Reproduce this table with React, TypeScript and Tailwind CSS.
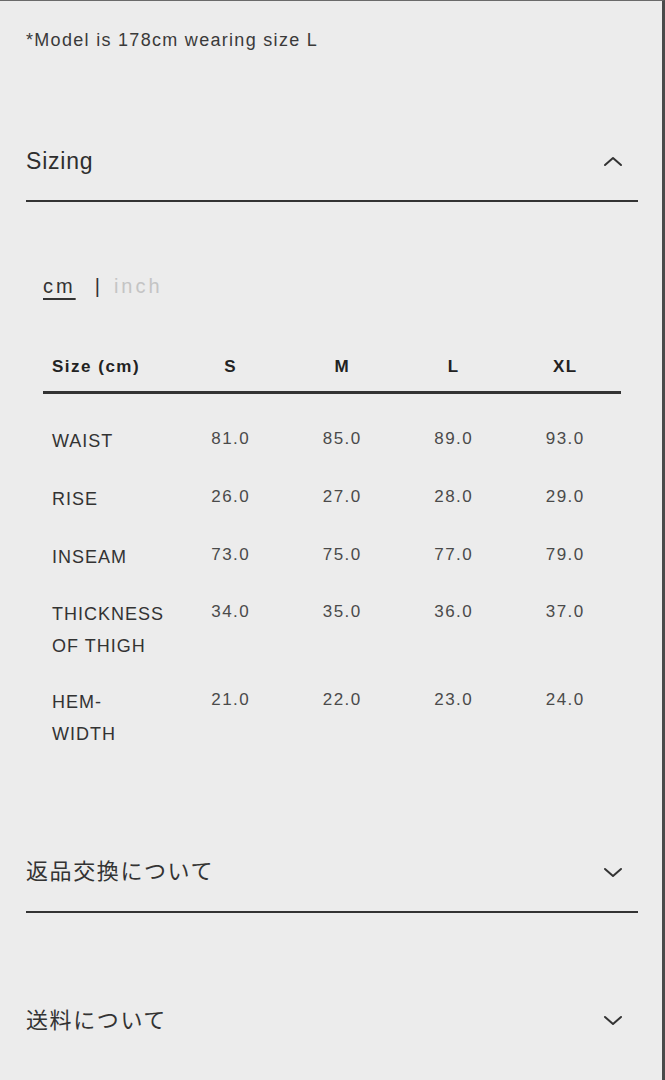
import React from "react";

const Chevron = ({ up }: { up?: boolean }) => (
  <svg width="20" height="12" viewBox="0 0 20 12" className="mr-[15px]">
    {up ? (
      <polyline points="2,10 10,3 18,10" fill="none" stroke="#333" strokeWidth="2" strokeLinecap="round" strokeLinejoin="round" />
    ) : (
      <polyline points="2,3 10,10 18,3" fill="none" stroke="#333" strokeWidth="2" strokeLinecap="round" strokeLinejoin="round" />
    )}
  </svg>
);

const rows: { label: string[]; values: string[] }[] = [
  { label: ["WAIST"], values: ["81.0", "85.0", "89.0", "93.0"] },
  { label: ["RISE"], values: ["26.0", "27.0", "28.0", "29.0"] },
  { label: ["INSEAM"], values: ["73.0", "75.0", "77.0", "79.0"] },
  { label: ["THICKNESS", "OF THIGH"], values: ["34.0", "35.0", "36.0", "37.0"] },
  { label: ["HEM-", "WIDTH"], values: ["21.0", "22.0", "23.0", "24.0"] },
];

export default function App() {
  const sans = { fontFamily: '"Liberation Sans", Arial, sans-serif' };
  const jp = { fontFamily: '"Liberation Sans", "Noto Sans CJK JP", sans-serif' };
  return (
    <div
      className="w-[665px] h-[1080px] bg-[#ececec] border-t border-[#6a6a6a] border-r-[3px] border-r-[#4a4a4a] pl-[26px] pr-[24px] overflow-hidden text-[#333]"
      style={sans}
    >
      <div className="pt-[27px] text-[18px] leading-[24px] tracking-[1.3px] text-[#3a3a3a]">
        *Model is 178cm wearing size L
      </div>

      <div className="mt-[70px] h-[80px] flex items-center justify-between border-b-2 border-[#333]">
        <span className="text-[23px] tracking-[0.8px] text-[#2e2e2e]">Sizing</span>
        <Chevron up />
      </div>

      <div className="mt-[70px] ml-[17px] flex items-center h-[28px] text-[20px] tracking-[3px]">
        <span className="underline underline-offset-[5px] decoration-2 text-[#333]">cm</span>
        <span className="ml-[19px] text-[#333]">|</span>
        <span className="ml-[11px] text-[#c4c4c4]">inch</span>
      </div>

      <div className="mt-[43px] mx-[17px]">
        <div className="grid grid-cols-[132px_repeat(4,1fr)] h-[51px] items-center border-b-[3px] border-[#333] font-bold text-[17px] tracking-[1.5px] text-[#222]">
          <span className="pl-[9px]">Size (cm)</span>
          <span className="text-center">S</span>
          <span className="text-center">M</span>
          <span className="text-center">L</span>
          <span className="text-center">XL</span>
        </div>
        <div className="pt-[18px]">
          {rows.map((r, i) => (
            <div
              key={i}
              className={`grid grid-cols-[132px_repeat(4,1fr)] items-start ${r.label.length > 1 ? "py-[12px]" : "py-[13px]"}`}
            >
              <div className="pl-[9px] text-[18px] leading-[32px] tracking-[1px] text-[#333]">
                {r.label.map((l, j) => (
                  <div key={j}>{l}</div>
                ))}
              </div>
              {r.values.map((v, j) => (
                <div key={j} className="text-center text-[17px] leading-[28px] tracking-[1.5px] text-[#4a4a4a]">
                  {v}
                </div>
              ))}
            </div>
          ))}
        </div>
      </div>

      <div className="mt-[70px] h-[81px] flex items-center justify-between border-b-2 border-[#333]" style={jp}>
        <span className="text-[22px] tracking-[1.6px] text-[#333]">返品交換について</span>
        <Chevron />
      </div>

      <div className="mt-[67px] h-[80px] flex items-center justify-between" style={jp}>
        <span className="text-[22px] tracking-[1.6px] text-[#333]">送料について</span>
        <Chevron />
      </div>
    </div>
  );
}
